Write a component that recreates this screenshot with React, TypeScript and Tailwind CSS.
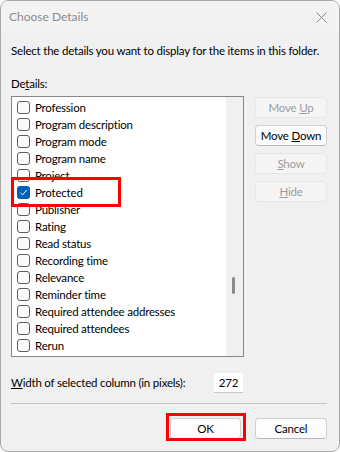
const details = [
  'Profession',
  'Program description',
  'Program mode',
  'Program name',
  'Project',
  'Protected',
  'Publisher',
  'Rating',
  'Read status',
  'Recording time',
  'Relevance',
  'Reminder time',
  'Required attendee addresses',
  'Required attendees',
  'Rerun',
  'Resolution',
];

function CheckBox({ checked }: { checked: boolean }) {
  if (checked) {
    return (
      <span className="flex h-[13px] w-[13px] shrink-0 items-center justify-center rounded-[3px] bg-[#005fb8]">
        <svg width="9" height="9" viewBox="0 0 9 9" fill="none">
          <path d="M1.5 4.8 L3.6 6.8 L7.6 2.2" stroke="white" strokeWidth="1" />
        </svg>
      </span>
    );
  }
  return <span className="h-[13px] w-[13px] shrink-0 rounded-[3px] border border-[#5f5f5f] bg-[#fbfbfb]" />;
}

function SideButton({ children, enabled }: { children: React.ReactNode; enabled?: boolean }) {
  return (
    <div
      className={
        enabled
          ? 'flex h-[21px] w-[72px] items-center justify-center rounded-[4px] border border-[#d0d0d0] border-b-[#b8b8b8] bg-[#fdfdfd] text-black'
          : 'flex h-[21px] w-[72px] items-center justify-center rounded-[4px] border border-[#e6e6e6] bg-[#f5f5f5] text-[#9d9d9d]'
      }
    >
      <span className="whitespace-pre">{children}</span>
    </div>
  );
}

export default function App() {
  return (
    <div className="h-[452px] w-[340px] bg-white font-['Lato',sans-serif] text-[11.5px] leading-[16px] tracking-[-0.2px] text-black">
      <div className="flex h-full flex-col overflow-hidden rounded-[8px] border border-[#a9a9a9] bg-[#f0f0f0]">
        <div className="flex h-[32px] shrink-0 items-center justify-between bg-[#f3f3f3] pl-[8px] pr-[12px]">
          <span className="text-[12px] tracking-normal text-[#8b8b8b]">Choose Details</span>
          <svg width="11" height="11" viewBox="0 0 11 11" fill="none">
            <path d="M0.5 0.5 L10.5 10.5 M10.5 0.5 L0.5 10.5" stroke="#8a8a8a" strokeWidth="1" />
          </svg>
        </div>

        <div className="flex flex-col pl-[10px] pr-[12px]">
          <p className="whitespace-nowrap pt-[10px]">
            Select the details you want to display for the items in this folder.
          </p>
          <p className="mt-[17px]">
            De<u>t</u>ails:
          </p>

          <div className="mt-[4px] flex items-start">
            <div className="relative h-[261px] w-[233px] border border-[#828790] bg-white">
              <div className="flex h-full">
                <ul className="flex-1 overflow-hidden pt-[2px]">
                  {details.map((d) => (
                    <li key={d} className="flex h-[17px] items-center gap-[5px] pl-[5px]">
                      <CheckBox checked={d === 'Protected'} />
                      <span className="whitespace-nowrap">{d}</span>
                    </li>
                  ))}
                </ul>
                <div className="relative w-[17px] shrink-0 bg-[#f0f0f0]">
                  <span className="absolute left-[6px] top-[180px] h-[17px] w-[3px] rounded-full bg-[#8a8a8a]" />
                </div>
              </div>
              <span className="absolute left-[-1px] top-[80px] h-[30px] w-[110px] border-[3px] border-[#ff0000]" />
            </div>

            <div className="ml-[11px] mt-[1px] flex flex-col gap-[7px]">
              <SideButton>
                Move <u>U</u>p
              </SideButton>
              <SideButton enabled>
                Move <u>D</u>own
              </SideButton>
              <SideButton>
                <u>S</u>how
              </SideButton>
              <SideButton>
                <u>H</u>ide
              </SideButton>
            </div>
          </div>

          <div className="mt-[16px] flex items-center">
            <span className="whitespace-nowrap">
              <u>W</u>idth of selected column (in pixels):
            </span>
            <span className="ml-auto mr-[84px] flex h-[20px] w-[29px] shrink-0 items-center justify-center border-b border-[#c8c8c8] bg-white">
              272
            </span>
          </div>

          <div className="mt-[10px] h-px bg-[#c4c4c4]" />

          <div className="mt-[14px] flex justify-end gap-[14px]">
            <div className="relative">
              <div className="flex h-[21px] w-[71px] items-center justify-center rounded-[4px] border border-[#d0d0d0] border-b-[#b8b8b8] bg-[#fdfdfd]">
                OK
              </div>
              <span className="absolute left-[-4px] top-[-5px] h-[28px] w-[80px] border-[3px] border-[#ff0000]" />
            </div>
            <div className="flex h-[21px] w-[72px] items-center justify-center rounded-[4px] border border-[#d0d0d0] border-b-[#b8b8b8] bg-[#fdfdfd]">
              Cancel
            </div>
          </div>
        </div>
      </div>
    </div>
  );
}
